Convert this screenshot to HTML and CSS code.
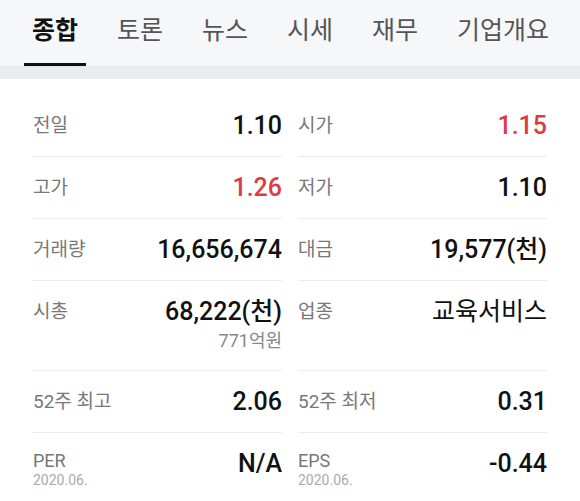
FILE: index.html
```html
<!DOCTYPE html>
<html lang="ko">

<head>
    <meta charset="UTF-8" />
    <meta name="viewport" content="width=device-width, initial-scale=1.0" />
    <title>종합</title>
    <link rel="stylesheet" href="styles.css">
</head>

<body>
    <div class="tabs">
        <a class="tab active" href="#">종합</a>
        <a class="tab" href="#">토론</a>
        <a class="tab" href="#">뉴스</a>
        <a class="tab" href="#">시세</a>
        <a class="tab" href="#">재무</a>
        <a class="tab" href="#">기업개요</a>
    </div>
    <div class="band"></div>

    <div class="summary">
        <div class="cell">
            <span class="label">전일</span>
            <span class="value">1.10</span>
        </div>
        <div class="cell">
            <span class="label">시가</span>
            <span class="value up">1.15</span>
        </div>

        <div class="cell">
            <span class="label">고가</span>
            <span class="value up">1.26</span>
        </div>
        <div class="cell">
            <span class="label">저가</span>
            <span class="value">1.10</span>
        </div>

        <div class="cell">
            <span class="label">거래량</span>
            <span class="value">16,656,674</span>
        </div>
        <div class="cell">
            <span class="label">대금</span>
            <span class="value">19,577(천)</span>
        </div>

        <div class="cell">
            <span class="label">시총</span>
            <div class="value-box">
                <span class="value">68,222(천)</span>
                <span class="sub">771억원</span>
            </div>
        </div>
        <div class="cell">
            <span class="label">업종</span>
            <span class="value text">교육서비스</span>
        </div>

        <div class="cell">
            <span class="label">52주 최고</span>
            <span class="value">2.06</span>
        </div>
        <div class="cell">
            <span class="label">52주 최저</span>
            <span class="value">0.31</span>
        </div>

        <div class="cell">
            <div class="label-box">
                <span class="label-en">PER</span>
                <span class="date">2020.06.</span>
            </div>
            <span class="value">N/A</span>
        </div>
        <div class="cell">
            <div class="label-box">
                <span class="label-en">EPS</span>
                <span class="date">2020.06.</span>
            </div>
            <span class="value">-0.44</span>
        </div>
    </div>
</body>

</html>
```

FILE: styles.css
```css
body {
    font-family: Roboto, "Noto Sans CJK KR", sans-serif;
    background-color: #ffffff;
    margin: 0;
    color: #111;
}

/* Tabs */
.tabs {
    display: flex;
    gap: 23px;
    padding: 0 24px;
    height: 66px;
    background-color: #f6f7f9;
}

.tab {
    display: block;
    padding: 0 8px;
    font-size: 25px;
    line-height: 62px;
    color: #555;
    text-decoration: none;
    border-bottom: 3px solid transparent;
    white-space: nowrap;
}

.tab.active {
    color: #111;
    font-weight: bold;
    border-bottom-color: #111;
}

.band {
    height: 13px;
    background-color: #eaecef;
    border-top: 1px solid #e2e4e7;
    box-sizing: border-box;
}

/* Summary grid */
.summary {
    display: grid;
    grid-template-columns: 1fr 1fr;
    column-gap: 16px;
    padding: 16px 33px 0;
}

.cell {
    display: flex;
    justify-content: space-between;
    align-items: flex-start;
    padding: 16px 0 15px;
    border-bottom: 1px solid #ececec;
}

.label {
    font-size: 19px;
    line-height: 29px;
    color: #787878;
}

.label-box {
    display: flex;
    flex-direction: column;
}

.label-en {
    font-size: 18px;
    line-height: 24px;
    color: #777;
}

.date {
    font-size: 14px;
    line-height: 14px;
    color: #aaa;
}

.value-box {
    display: flex;
    flex-direction: column;
    align-items: flex-end;
}

.value {
    font-size: 25px;
    line-height: 30px;
    font-weight: 500;
    color: #111;
}

.value.up {
    color: #dd3b40;
}

.value.text {
    font-size: 25px;
    font-weight: normal;
}

.sub {
    font-size: 18px;
    line-height: 28px;
    color: #888;
}
```
